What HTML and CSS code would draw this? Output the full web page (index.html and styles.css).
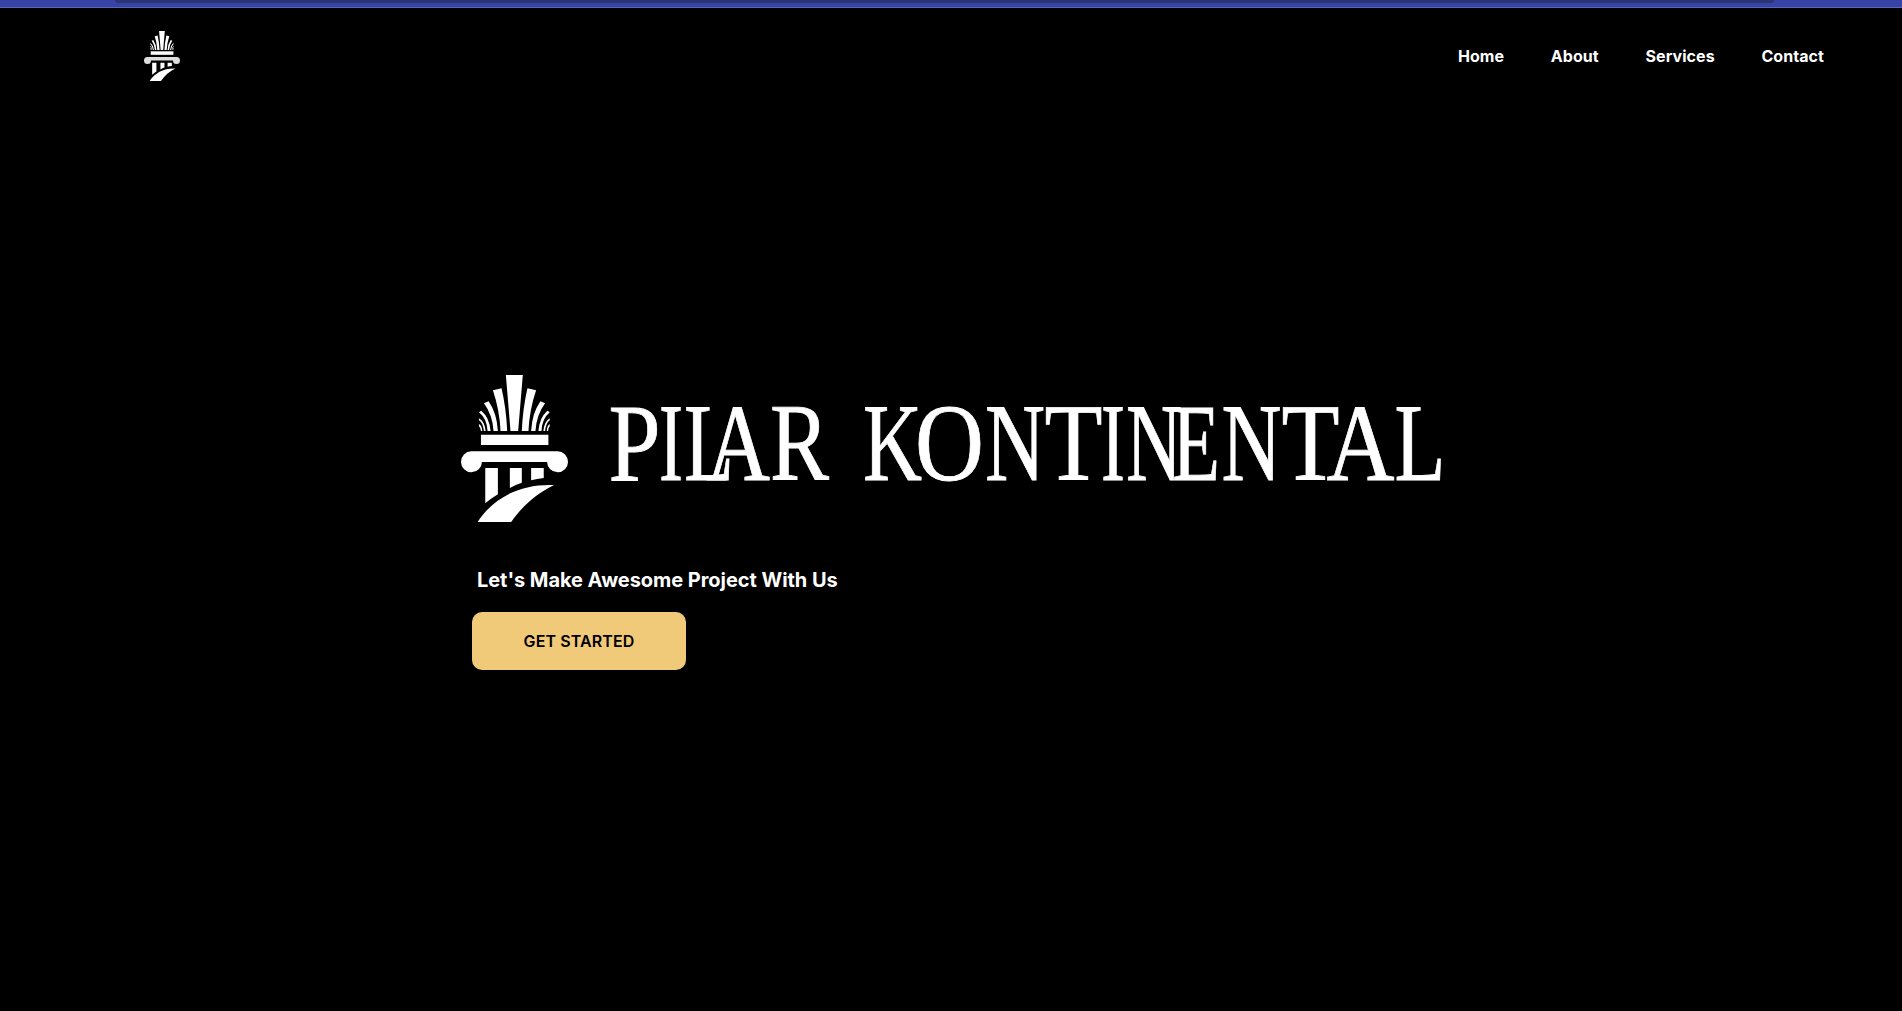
FILE: index.html
```html
<!DOCTYPE html>
<html lang="en">
<head>
<meta charset="utf-8">
<title>Pilar Kontinental</title>
<link rel="stylesheet" href="styles.css">
</head>
<body>
<div class="topbar"><div class="topbar-tab"></div></div>
<header class="header">
  <svg class="brand" viewBox="33 30 322 441" preserveAspectRatio="none" aria-label="Pilar Kontinental">
    <defs>
      <g id="pillar">
        <path d="M168 30H219L205 198H182Z"/>
        <path d="M129 76L155 70Q169 130 172 198H152Q149 135 129 76Z"/>
        <path d="M259 76L233 70Q219 130 216 198H236Q239 135 259 76Z"/>
        <path d="M102 115L116 109Q141 145 144 198H131Q128 150 102 115Z"/>
        <path d="M286 115L272 109Q247 145 244 198H257Q260 150 286 115Z"/>
        <path d="M87 142L94 137Q119 158 122 198H113Q111 161 87 142ZM87 160Q104 169 107 198H102Q99 173 87 166ZM87 177Q96 182 97 198H93Q92 187 87 184Z"/>
        <path d="M300 142L293 137Q269 158 266 198H275Q277 161 300 142ZM300 160Q284 169 281 198H286Q289 173 300 166ZM300 177Q292 182 291 198H295Q296 187 300 184Z"/>
        <path d="M93 209H296V240H93Z"/>
        <path class="capital" d="M64 259H324A31.500 31.500 0 1 1 292 291H96A31.500 31.500 0 1 1 64 259Z"/>
        <path d="M106 309H144V388Q124 400 106 415ZM180 309H216V353Q197 359 180 369ZM244 309H282V339Q262 341 244 346Z"/>
        <path d="M83 471C130 398 211 356 313 360C260 387 218 422 184 471Z"/>
      </g>
    </defs>
    <use href="#pillar"/>
  </svg>
  <nav class="nav">
    <a>Home</a><a>About</a><a>Services</a><a>Contact</a>
  </nav>
</header>
<main class="hero">
  <div class="lockup">
    <svg class="emblem" viewBox="33 30 322 441" preserveAspectRatio="none"><use href="#pillar"/></svg>
    <svg class="wordmark" viewBox="600 375 850 147" aria-label="Pilar Kontinental">
      <text y="479.500"><tspan x="608.500" textLength="52" lengthAdjust="spacingAndGlyphs">P</tspan><tspan x="659" textLength="24" lengthAdjust="spacingAndGlyphs">I</tspan><tspan x="684" textLength="50" lengthAdjust="spacingAndGlyphs">L</tspan><tspan x="706" textLength="64" lengthAdjust="spacingAndGlyphs">A</tspan><tspan x="770" textLength="59" lengthAdjust="spacingAndGlyphs">R</tspan></text>
      <text y="479.500"><tspan x="863" textLength="59" lengthAdjust="spacingAndGlyphs">K</tspan><tspan x="915" textLength="69" lengthAdjust="spacingAndGlyphs">O</tspan><tspan x="985" textLength="60" lengthAdjust="spacingAndGlyphs">N</tspan><tspan x="1044.500" textLength="58" lengthAdjust="spacingAndGlyphs">T</tspan><tspan x="1101" textLength="24" lengthAdjust="spacingAndGlyphs">I</tspan><tspan x="1126" textLength="56" lengthAdjust="spacingAndGlyphs">N</tspan><tspan x="1172" textLength="48" lengthAdjust="spacingAndGlyphs">E</tspan><tspan x="1221.500" textLength="60" lengthAdjust="spacingAndGlyphs">N</tspan><tspan x="1281.500" textLength="58" lengthAdjust="spacingAndGlyphs">T</tspan><tspan x="1326.500" textLength="68" lengthAdjust="spacingAndGlyphs">A</tspan><tspan x="1394.500" textLength="51" lengthAdjust="spacingAndGlyphs">L</tspan></text>
    </svg>
  </div>
  <p class="tagline">Let's Make Awesome Project With Us</p>
  <button class="cta">GET STARTED</button>
</main>
</body>
</html>
```
FILE: styles.css
```css
* { box-sizing: border-box; }
body {
  margin: 0;
  height: 1011px;
  overflow: hidden;
  background: #000;
  color: #fff;
  font-family: Inter, sans-serif;
}
.topbar {
  height: 8px;
  padding: 0 128px 0 115px;
  background: #3843a8;
  border-bottom: 1px solid #5c67b8;
}
.topbar-tab {
  height: 3px;
  background: #2d3476;
  border-radius: 0 0 10px 10px;
}
.header {
  display: flex;
  justify-content: space-between;
  align-items: center;
  height: 96px;
  padding: 0 78px 0 144px;
}
.brand { width: 36px; height: 50px; fill: #fff; --capital: #ddd; }
.capital { fill: var(--capital, #fff); }
.nav {
  display: flex;
  gap: 46.8px;
  font-size: 16px;
  font-weight: 700;
  letter-spacing: .06px;
}
.hero {
  display: flex;
  flex-direction: column;
  align-items: flex-start;
  padding: 271px 0 0 461px;
}
.lockup { display: flex; gap: 32px; height: 147px; }
.emblem { width: 107px; height: 147px; fill: #fff; }
.wordmark {
  width: 850px;
  height: 147px;
  overflow: visible;
  fill: #fff;
  stroke: #fff;
  stroke-width: .8px;
  font: 111px "Liberation Serif", serif;
}
.tagline {
  margin: 46px 0 0 16px;
  font-size: 20px;
  line-height: 24px;
  font-weight: 700;
  letter-spacing: -.05px;
}
.cta {
  width: 214px;
  height: 58px;
  margin: 20px 0 0 11px;
  padding: 0;
  border: 0;
  border-radius: 10px;
  background: #f0c979;
  color: #000;
  font: 600 16px Inter, sans-serif;
  letter-spacing: .1px;
}
```
